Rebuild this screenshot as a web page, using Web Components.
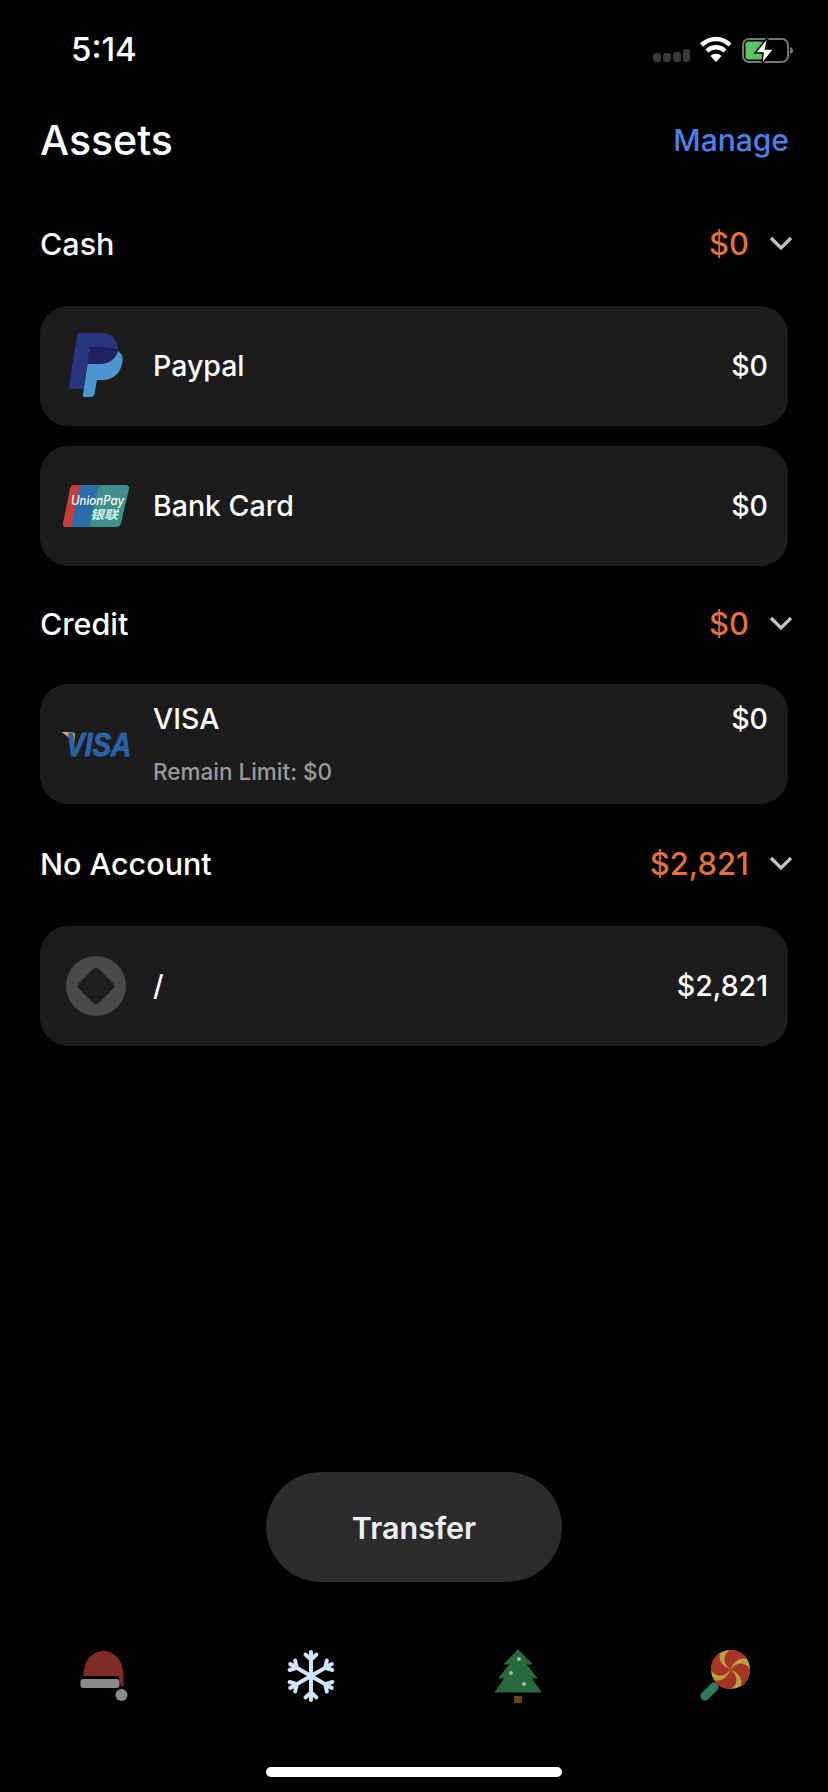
<!DOCTYPE html>
<html>
<head>
<meta charset="utf-8">
<title>Assets</title>
<style>
    html, body { margin: 0; padding: 0; background: #000; }
    body { font-family: "Inter", "Noto Sans CJK SC", sans-serif; color: #fff; }
</style>
</head>
<body>
<assets-page>
    <status-bar time="5:14"></status-bar>
    <assets-header title="Assets" action="Manage"></assets-header>

    <section-head label="Cash" total="$0" style="--top: 31px; --bottom: 33px"></section-head>
    <account-row name="Paypal" amount="$0">
        <svg slot="icon" width="72" height="72" viewBox="0 0 72 72">
            <path fill="#4a95d2" d="M30 17 H44 C52 17 55 18 58 21 C62 24 64 28 62 34 C60 44 52 50 43 50 H37 L34.500 64 C34 66 33 67 31 67 H25 C23 67 22.500 66 23 64Z"/>
            <path fill="#2a3580" d="M19 3 H42 C52 3 59 10 58 21 C55 18 50 17 44 17 H30 L23 59 H11 C9.500 59 8.500 58 9 56 L17 5 C17.200 3.800 18 3 19 3Z"/>
            <path fill="#20225e" d="M30 17 H44 C50 17 55 18 58 21 C56 28 50 34 40 34 H27Z"/>
        </svg>
    </account-row>
    <account-row name="Bank Card" amount="$0" style="margin-top: 20px">
        <svg slot="icon" width="72" height="72" viewBox="0 0 72 72">
            <path fill="#c73c3c" d="M13 15 H30 C26 15 24.500 17 24 20 L15 57 H6 C3.500 57 2.500 55 3 53 L10 19 C10.500 16.500 11.500 15 13 15Z"/>
            <path fill="#2a6da8" d="M24 15 H48 C45 15 43 17 42 20 L33 57 H15 C12.500 57 11.500 55 12 53 L19 19 C19.500 16.500 21 15 24 15Z"/>
            <path fill="#3f8f8a" d="M44 15 H66 C68.500 15 69.500 17 69 19 L61 53 C60.500 55.500 59 57 56 57 H33 C30.500 57 29.500 55 30 53 L38 19 C38.500 16.500 40.500 15 44 15Z"/>
            <text x="11" y="35" fill="#fff" font-family="Inter, sans-serif" font-size="12.500" font-weight="500" font-style="italic" textLength="53" lengthAdjust="spacingAndGlyphs">UnionPay</text>
            <text x="30" y="49" fill="#d7eeea" font-family="Noto Sans CJK SC, sans-serif" font-size="12" font-weight="700" font-style="italic" textLength="28" lengthAdjust="spacingAndGlyphs">银联</text>
        </svg>
    </account-row>

    <section-head label="Credit" total="$0" style="--top: 27px; --bottom: 31px"></section-head>
    <account-row name="VISA" amount="$0" note="Remain Limit: $0">
        <svg slot="icon" width="72" height="72" viewBox="0 0 72 72">
            <path fill="#e8a73f" d="M1 24 H12 C14 24 15 25 15 27 L14 37 C11 31 7 27 1 24Z"/>
            <text transform="translate(6 48) scale(1 1.210)" fill="#2a62a8" stroke="#2a62a8" stroke-width="0.800" font-family="Liberation Sans, sans-serif" font-size="28" font-weight="700" font-style="italic">VISA</text>
        </svg>
    </account-row>

    <section-head label="No Account" total="$2,821" style="--top: 29px; --bottom: 33px"></section-head>
    <account-row name="/" amount="$2,821">
        <svg slot="icon" width="72" height="72" viewBox="0 0 72 72">
            <circle cx="36" cy="36" r="30" fill="#4a4a4a"/>
            <rect x="22" y="22" width="28" height="28" rx="4" fill="#1e1e1e" transform="rotate(45 36 36)"/>
        </svg>
    </account-row>

    <transfer-button label="Transfer"></transfer-button>

    <tab-bar>
        <svg width="54" height="54" viewBox="0 0 54 54">
            <path fill="#7f2b26" d="M6.500 27 C6.500 11 16 2 26.500 2 C38 2 46.500 12 46.500 27 V37 H44 L41.500 27Z"/>
            <rect x="3.500" y="30" width="39" height="9" rx="3" fill="#8b8b8b"/>
            <circle cx="44.500" cy="46" r="6" fill="#8b8b8b"/>
        </svg>
        <svg width="54" height="54" viewBox="0 0 54 54">
            <g stroke="#cfe3fb" stroke-width="4" stroke-linecap="round" stroke-linejoin="round" fill="none">
                <path d="M27 27 V3 M21.500 5.500 L27 10.500 L32.500 5.500"/>
                <path transform="rotate(60 27 27)" d="M27 27 V3 M21.500 5.500 L27 10.500 L32.500 5.500"/>
                <path transform="rotate(120 27 27)" d="M27 27 V3 M21.500 5.500 L27 10.500 L32.500 5.500"/>
                <path transform="rotate(180 27 27)" d="M27 27 V3 M21.500 5.500 L27 10.500 L32.500 5.500"/>
                <path transform="rotate(240 27 27)" d="M27 27 V3 M21.500 5.500 L27 10.500 L32.500 5.500"/>
                <path transform="rotate(300 27 27)" d="M27 27 V3 M21.500 5.500 L27 10.500 L32.500 5.500"/>
            </g>
        </svg>
        <svg width="54" height="54" viewBox="0 0 54 54">
            <polygon fill="#27693b" stroke="#27693b" stroke-linejoin="round" points="27,1 41,15 35,15 46,29 40,29 50,43 4,43 14,29 8,29 19,15 13,15"/>
            <rect x="23" y="47" width="8" height="7" fill="#6b4428"/>
            <circle cx="28" cy="10" r="2" fill="#a9b7ad"/>
            <circle cx="20" cy="24" r="2" fill="#a9b7ad"/>
            <circle cx="33" cy="35" r="2" fill="#a9b7ad"/>
        </svg>
        <svg width="54" height="54" viewBox="0 0 54 54">
            <path d="M7 47 L16 38" stroke="#2f7d58" stroke-width="9" stroke-linecap="round"/>
            <circle cx="32.500" cy="20.500" r="19.500" fill="#b9a23c"/>
            <g fill="#a83428">
                <path d="M32.500 20.500 C25 15 24 6 32 1 C39 1 46 4 49.500 10 C42 8 36 12 32.500 20.500Z"/>
                <path transform="rotate(90 32.500 20.500)" d="M32.500 20.500 C25 15 24 6 32 1 C39 1 46 4 49.500 10 C42 8 36 12 32.500 20.500Z"/>
                <path transform="rotate(180 32.500 20.500)" d="M32.500 20.500 C25 15 24 6 32 1 C39 1 46 4 49.500 10 C42 8 36 12 32.500 20.500Z"/>
                <path transform="rotate(270 32.500 20.500)" d="M32.500 20.500 C25 15 24 6 32 1 C39 1 46 4 49.500 10 C42 8 36 12 32.500 20.500Z"/>
            </g>
        </svg>
    </tab-bar>
    <home-indicator></home-indicator>
</assets-page>

<script>
    class AssetsPage extends HTMLElement {
        constructor() {
            super();
            this.attachShadow({ mode: "open" }).innerHTML = `
                <style>
                    :host {
                        display: flex;
                        flex-direction: column;
                        height: 1792px;
                        background: #000;
                        color: #fff;
                        overflow: hidden;
                    }
                </style>
                <slot></slot>
            `;
        }
    }

    class StatusBar extends HTMLElement {
        constructor() {
            super();
            this.attachShadow({ mode: "open" });
        }

        connectedCallback() {
            this.shadowRoot.innerHTML = `
                <style>
                    :host {
                        display: flex;
                        align-items: center;
                        justify-content: space-between;
                        height: 98px;
                        padding: 0 33px 0 71px;
                        box-sizing: border-box;
                    }
                    .time { font-size: 33px; font-weight: 500; }
                    .icons { display: flex; align-items: center; margin-top: 3px; }
                </style>
                <span class="time">${this.getAttribute("time")}</span>
                <div class="icons">
                    <svg width="142" height="30" viewBox="0 0 142 30">
                        <g fill="#3a3a3a">
                            <rect x="0" y="17" width="8" height="9" rx="3"/>
                            <rect x="10" y="17" width="8" height="9" rx="3"/>
                            <rect x="20" y="16" width="8" height="10" rx="3"/>
                            <rect x="30" y="13" width="7" height="13" rx="3"/>
                        </g>
                        <path fill="none" stroke="#fff" stroke-width="4.500" d="M48.500 9 C57 1 69 1 77 9"/>
                        <path fill="none" stroke="#fff" stroke-width="4.500" d="M54 15 C59 10 67 10 72 15"/>
                        <path fill="#fff" d="M57.500 20 C60.500 17 65.500 17 68.500 20 L63 26Z"/>
                        <rect x="90" y="3" width="45" height="23" rx="6" fill="none" stroke="#777" stroke-width="2"/>
                        <path d="M137 11 C139 11.500 140 13 140 14.500 C140 16 139 17.500 137 18Z" fill="#777"/>
                        <rect x="92.500" y="5.500" width="18" height="18" rx="3" fill="#5cc35f"/>
                        <path fill="#fff" stroke="#000" stroke-width="1.500" d="M115 1 L102 17 H110 L109 28 L121 13 H112.500Z"/>
                    </svg>
                </div>
            `;
        }
    }

    class AssetsHeader extends HTMLElement {
        constructor() {
            super();
            this.attachShadow({ mode: "open" });
        }

        connectedCallback() {
            this.shadowRoot.innerHTML = `
                <style>
                    :host {
                        display: flex;
                        align-items: center;
                        justify-content: space-between;
                        height: 84px;
                        padding: 0 39px 0 40px;
                    }
                    h1 { margin: 0; font-size: 41px; font-weight: 500; }
                    a { font-size: 30px; font-weight: 500; color: #4a80e8; }
                </style>
                <h1>${this.getAttribute("title")}</h1>
                <a>${this.getAttribute("action")}</a>
            `;
        }
    }

    class SectionHead extends HTMLElement {
        constructor() {
            super();
            this.attachShadow({ mode: "open" });
        }

        connectedCallback() {
            this.shadowRoot.innerHTML = `
                <style>
                    :host {
                        display: flex;
                        align-items: center;
                        height: 60px;
                        margin: var(--top, 28px) 0 var(--bottom, 32px);
                        padding: 0 35px 0 40px;
                    }
                    .label { flex: 1; font-size: 30.500px; font-weight: 500; }
                    .total { font-size: 31px; font-weight: 500; color: #e4703c; }
                    svg { margin-left: 20px; }
                </style>
                <span class="label">${this.getAttribute("label")}</span>
                <span class="total">${this.getAttribute("total")}</span>
                <svg width="24" height="16" viewBox="0 0 24 16">
                    <path d="M2 3 L12 13 L22 3" fill="none" stroke="#c4c4c4" stroke-width="3.200"/>
                </svg>
            `;
        }
    }

    class AccountRow extends HTMLElement {
        constructor() {
            super();
            this.attachShadow({ mode: "open" });
        }

        connectedCallback() {
            const note = this.getAttribute("note");
            this.shadowRoot.innerHTML = `
                <style>
                    :host {
                        display: flex;
                        align-items: center;
                        height: 120px;
                        margin: 0 40px;
                        padding: 0 20px;
                        box-sizing: border-box;
                        border-radius: 28px;
                        background: #1c1c1d;
                        font-size: 28.500px;
                        font-weight: 500;
                    }
                    .icon { width: 72px; height: 72px; flex: none; margin-right: 21px; }
                    .body { flex: 1; display: flex; flex-direction: column; gap: 22px; margin-bottom: 2px; }
                    .top { display: flex; justify-content: space-between; }
                    .note { font-size: 22.500px; color: #9a9a9a; }
                    :host([note]) .body { align-self: flex-start; margin: 17px 0 0; }
                </style>
                <div class="icon"><slot name="icon"></slot></div>
                <div class="body">
                    <div class="top"><span>${this.getAttribute("name")}</span><span>${this.getAttribute("amount")}</span></div>
                    ${note ? `<div class="note">${note}</div>` : ""}
                </div>
            `;
        }
    }

    class TransferButton extends HTMLElement {
        constructor() {
            super();
            this.attachShadow({ mode: "open" });
        }

        connectedCallback() {
            this.shadowRoot.innerHTML = `
                <style>
                    :host {
                        display: flex;
                        justify-content: center;
                        margin-top: auto;
                    }
                    button {
                        all: unset;
                        display: flex;
                        align-items: center;
                        justify-content: center;
                        width: 296px;
                        height: 110px;
                        border-radius: 55px;
                        background: #2c2c2e;
                        color: #eee;
                        font-size: 30.500px;
                        font-weight: 600;
                    }
                </style>
                <button>${this.getAttribute("label")}</button>
            `;
        }
    }

    class TabBar extends HTMLElement {
        constructor() {
            super();
            this.attachShadow({ mode: "open" }).innerHTML = `
                <style>
                    :host {
                        display: grid;
                        grid-template-columns: repeat(4, 1fr);
                        justify-items: center;
                        margin-top: 67px;
                    }
                    ::slotted(svg) { display: block; }
                </style>
                <slot></slot>
            `;
        }
    }

    class HomeIndicator extends HTMLElement {
        constructor() {
            super();
            this.attachShadow({ mode: "open" }).innerHTML = `
                <style>
                    :host {
                        display: block;
                        width: 296px;
                        height: 10px;
                        margin: 64px auto 15px;
                        border-radius: 5px;
                        background: #fff;
                    }
                </style>
            `;
        }
    }

    customElements.define("assets-page", AssetsPage);
    customElements.define("status-bar", StatusBar);
    customElements.define("assets-header", AssetsHeader);
    customElements.define("section-head", SectionHead);
    customElements.define("account-row", AccountRow);
    customElements.define("transfer-button", TransferButton);
    customElements.define("tab-bar", TabBar);
    customElements.define("home-indicator", HomeIndicator);
</script>
</body>
</html>
